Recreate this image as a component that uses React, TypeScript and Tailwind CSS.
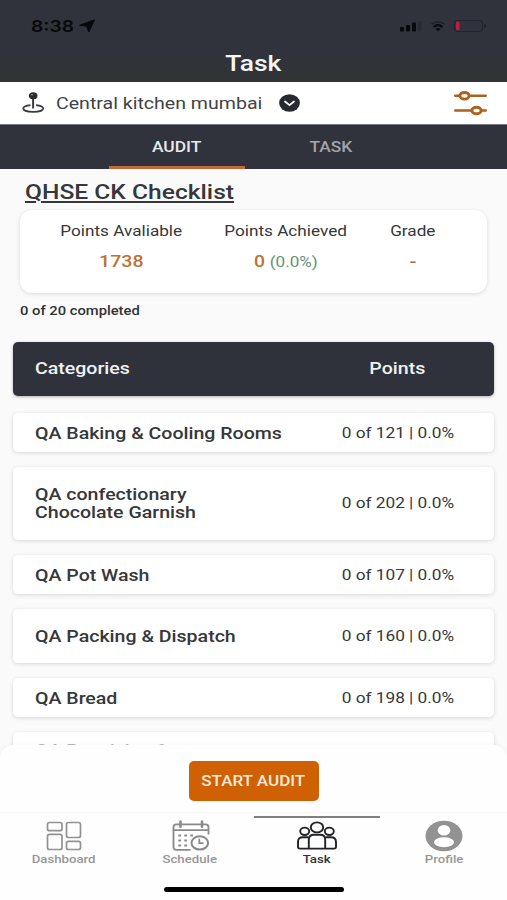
import React from "react";

type Row = { name: string[]; points: string; box: string };

const rows: Row[] = [
  { name: ["QA Baking & Cooling Rooms"], points: "0 of 121 | 0.0%", box: "h-[39px]" },
  { name: ["QA confectionary", "Chocolate Garnish"], points: "0 of 202 | 0.0%", box: "h-[73px] pb-[2px]" },
  { name: ["QA Pot Wash"], points: "0 of 107 | 0.0%", box: "h-[39px]" },
  { name: ["QA Packing & Dispatch"], points: "0 of 160 | 0.0%", box: "h-[54px] pb-[1px]" },
  { name: ["QA Bread"], points: "0 of 198 | 0.0%", box: "h-[39px]" },
  { name: ["QA Receiving &"], points: "", box: "h-[36px] text-[#b4b4b6]" },
];

function Wide({ className = "", scale = "scale-x-[1.2]", children }: { className?: string; scale?: string; children: React.ReactNode }) {
  return <span className={"block w-max whitespace-nowrap " + scale + " " + className}>{children}</span>;
}

function StatusIcons() {
  return (
    <svg className="mr-[20px] mt-[18px] h-[16px] w-[88px]" viewBox="0 0 88 16">
      <g fill="#08090c">
        <rect x="1" y="9" width="4" height="4.5" rx="1" />
        <rect x="7" y="7" width="4" height="6.5" rx="1" />
        <rect x="13" y="4.500" width="4" height="9" rx="1" />
      </g>
      <rect x="19" y="3" width="3.500" height="10.500" rx="1" fill="#282b32" />
      <path d="M32.500 6.300Q39 1.500 45.500 6.300" fill="none" stroke="#202329" strokeWidth="1.700" />
      <path d="M34.500 9Q39 5.200 43.500 9" fill="none" stroke="#08090c" strokeWidth="2.200" />
      <path d="M36.500 10.900Q39 9.200 41.500 10.900L39 13.200Z" fill="#08090c" />
      <rect x="55.500" y="2.500" width="28" height="11" rx="3.500" fill="none" stroke="#23252c" strokeWidth="1.200" />
      <rect x="57" y="3.800" width="3.500" height="8.500" rx="1.200" fill="#b8213f" />
      <path d="M85.300 6V10Q87 9.300 87 8T85.300 6Z" fill="#1d1f25" />
    </svg>
  );
}

function PinIcon() {
  return (
    <svg className="h-[22px] w-[23px]" viewBox="0 0 23 22">
      <path d="M8.500 13.100C4 13.600 1.200 14.800 1.200 16.400C1.200 18.400 5.500 19.800 11.200 19.800S21.200 18.400 21.200 16.400C21.200 14.800 18.400 13.600 14 13.100" fill="none" stroke="#3a3b3e" strokeWidth="1.700" />
      <path d="M10.100 5H12.100V16.500H10.100Z" fill="#3a3b3e" />
      <ellipse cx="11.200" cy="3.800" rx="4.300" ry="3.500" fill="#292b2f" />
      <ellipse cx="10" cy="2.700" rx="1.100" ry=".8" fill="#9a9b9d" />
    </svg>
  );
}

function FilterIcon() {
  return (
    <svg className="h-[26px] w-[33px]" viewBox="0 0 33 26" fill="none" stroke="#ad611f">
      <path d="M1.200 5.800H5.500M15 5.800H31.800M1.200 20.500H17M27.500 20.500H31.800" strokeWidth="2.400" strokeLinecap="round" />
      <ellipse cx="10.500" cy="5.800" rx="4.600" ry="3.300" strokeWidth="2.900" />
      <ellipse cx="22.500" cy="20.500" rx="4.600" ry="3.300" strokeWidth="2.900" />
    </svg>
  );
}

function DashboardIcon() {
  return (
    <svg className="ml-[2px] h-[32px] w-[42px]" viewBox="0 0 42 32" fill="none" stroke="#929292" strokeWidth="1.700">
      <rect x="4.500" y="2.500" width="14.500" height="8.200" rx="2" />
      <rect x="23.500" y="2.500" width="14" height="15" rx="2" />
      <rect x="4.500" y="14.300" width="14.500" height="15.200" rx="2" />
      <rect x="23.500" y="21.300" width="14" height="8.200" rx="2" />
    </svg>
  );
}

function ScheduleIcon() {
  return (
    <svg className="ml-[1px] h-[32px] w-[42px]" viewBox="0 0 42 32" fill="none" stroke="#898989" strokeWidth="1.800">
      <path d="M20.500 29.800H6.500Q3.500 29.800 3.500 27V7Q3.500 4.300 6.500 4.300H35.500Q38.500 4.300 38.500 7V14.500" />
      <path d="M3.500 10.200H38.500" />
      <path d="M10.500 1.500V6.800M32 1.500V6.800" strokeWidth="2.500" strokeLinecap="round" />
      <path d="M8.300 15.500H23M8.300 20.500H20M8.300 25.500H20" strokeWidth="2.200" strokeDasharray="2.800 3.200" />
      <ellipse cx="29.800" cy="22.900" rx="8.300" ry="6.700" strokeWidth="2" />
      <path d="M29.300 18.800V23.200H33.500" />
    </svg>
  );
}

function TeamIcon() {
  return (
    <svg className="h-[32px] w-[42px]" viewBox="0 0 42 32" fill="none" stroke="#222326" strokeWidth="1.900">
      <ellipse cx="21" cy="7.400" rx="6.200" ry="5" />
      <ellipse cx="8.700" cy="11.300" rx="4.500" ry="3.700" />
      <ellipse cx="33.300" cy="11.300" rx="4.500" ry="3.700" />
      <path d="M12.800 28.600V19.500Q12.800 14.700 18 14.700H24Q29.200 14.700 29.200 19.500V28.600" />
      <path d="M12.500 17.200H7Q2 17.200 2 22V26.800Q2 28.600 4 28.600H38Q40 28.600 40 26.800V22Q40 17.200 35 17.200H29.500" />
    </svg>
  );
}

function ProfileIcon() {
  return (
    <svg className="h-[32px] w-[42px]" viewBox="0 0 42 32">
      <ellipse cx="21" cy="16" rx="18.500" ry="15.300" fill="#929292" />
      <ellipse cx="21" cy="10.200" rx="6.300" ry="5.200" fill="#fefefe" />
      <ellipse cx="21" cy="22.200" rx="10" ry="5" fill="#fefefe" />
    </svg>
  );
}

const tabs = [
  { label: "Dashboard", icon: <DashboardIcon />, tone: "text-[#969696]" },
  { label: "Schedule", icon: <ScheduleIcon />, tone: "text-[#969696]" },
  { label: "Task", icon: <TeamIcon />, tone: "text-[#303236]" },
  { label: "Profile", icon: <ProfileIcon />, tone: "text-[#969696]" },
];

export default function App() {
  return (
    <div className="flex h-[900px] w-[507px] flex-col overflow-hidden bg-[#fafafa] font-['Roboto',sans-serif] text-[#36373a]">
      <header className="h-[82px] shrink-0 bg-linear-to-b from-[#30333c] from-60% to-[#313335]">
        <div className="flex h-[44px] justify-between">
          <div className="flex items-start pl-[31px] pt-[16px] text-[#08090c]">
            <Wide className="origin-left font-['Inter',sans-serif] text-[16px] font-semibold leading-[20px]">8:38</Wide>
            <svg className="ml-[12px] mt-[3px] h-[14px] w-[16px]" viewBox="0 0 16 14">
              <path d="M15.500 .8L9.800 13L7.500 7.200L.5 6.300Z" fill="#08090c" stroke="#08090c" strokeWidth="1" strokeLinejoin="round" />
            </svg>
          </div>
          <StatusIcons />
        </div>
        <div className="flex justify-center pt-[6px]">
          <Wide className="text-[22px] font-medium leading-[28px] text-[#f5f6f8]">Task</Wide>
        </div>
      </header>

      <div className="flex h-[42px] shrink-0 items-center bg-white pl-[22px] pr-[20px]">
        <PinIcon />
        <div className="ml-[11px] w-[223px]">
          <Wide scale="scale-x-[1.15]" className="origin-left text-[17px] leading-[22px] text-[#424346]">Central kitchen mumbai</Wide>
        </div>
        <svg className="h-[18px] w-[21px]" viewBox="0 0 21 18">
          <ellipse cx="10.500" cy="9" rx="10.400" ry="8.800" fill="#292a30" />
          <path d="M6 7.500L10.500 11.200L15 7.500" fill="none" stroke="#fff" strokeWidth="1.700" strokeLinecap="round" />
        </svg>
        <div className="ml-auto"><FilterIcon /></div>
      </div>

      <nav className="flex h-[45px] shrink-0 border-t border-[#777984] bg-[#30323c] pl-[109px]">
        <div className="flex w-[136px] flex-col items-center border-b-[3px] border-[#c16a35] pt-[13px]">
          <Wide className="text-[14.500px] font-medium leading-[20px] text-[#e8e9ec]">AUDIT</Wide>
        </div>
        <div className="flex w-[172px] flex-col items-center pt-[13px]">
          <Wide className="text-[14.500px] font-medium leading-[20px] text-[#a4a5aa]">TASK</Wide>
        </div>
      </nav>

      <main className="flex h-[576px] shrink-0 flex-col overflow-hidden px-[13px] pt-[9px]">
        <h1 className="h-[32px] shrink-0 pl-[12px] pt-[1px]">
          <Wide className="origin-left text-[20.500px] font-medium leading-[27px] underline decoration-[1.500px] underline-offset-[2px]">QHSE CK Checklist</Wide>
        </h1>
        <section className="ml-[7px] flex h-[83px] w-[467px] shrink-0 rounded-[12px] bg-white pt-[10px] shadow-[0_1px_4px_rgba(0,0,0,0.13)]">
          <div className="flex w-[202px] flex-col items-center">
            <Wide scale="scale-x-[1.145]" className="text-[15px] leading-[22px]">Points Avaliable</Wide>
            <Wide scale="scale-x-[1.15]" className="mt-[8px] text-[17px] font-medium leading-[22px] text-[#bd7131]">1738</Wide>
          </div>
          <div className="flex w-[128px] flex-col items-center">
            <Wide scale="scale-x-[1.145]" className="text-[15px] leading-[22px]">Points Achieved</Wide>
            <Wide scale="scale-x-[1.14]" className="mt-[8px] leading-[22px]">
              <span className="text-[17px] font-medium text-[#bd7131]">0</span>
              <span className="ml-[4px] text-[15px] text-[#669178]">(0.0%)</span>
            </Wide>
          </div>
          <div className="flex w-[126px] flex-col items-center">
            <Wide scale="scale-x-[1.145]" className="text-[15px] leading-[22px]">Grade</Wide>
            <Wide className="mt-[8px] text-[17px] font-medium leading-[22px] text-[#9b754f]">-</Wide>
          </div>
        </section>
        <div className="ml-[7px] mt-[9px] shrink-0">
          <Wide scale="scale-x-[1.135]" className="origin-left text-[13px] font-medium leading-[18px] text-[#303134]">0 of 20 completed</Wide>
        </div>

        <div className="mt-[22px] flex h-[54px] shrink-0 items-center rounded-[5px] bg-[#2f323b] pb-[2px] pl-[22px] text-[#f0f1f4] shadow-[0_1px_3px_rgba(0,0,0,0.3)]">
          <Wide scale="scale-x-[1.15]" className="origin-left text-[17px] font-medium leading-[20px]">Categories</Wide>
          <div className="ml-auto flex w-[193px] justify-center">
            <Wide scale="scale-x-[1.15]" className="text-[17px] font-medium leading-[20px]">Points</Wide>
          </div>
        </div>
        <div className="mt-[17px] flex flex-col gap-[15px]">
          {rows.map((r) => (
            <div key={r.name[0]} className={"flex shrink-0 items-center rounded-[5px] bg-white pl-[22px] shadow-[0_1px_4px_rgba(0,0,0,0.14)] " + r.box}>
              <div className="text-[17px] font-medium leading-[18px]">
                {r.name.map((line) => <Wide key={line} scale="scale-x-[1.15]" className="origin-left">{line}</Wide>)}
              </div>
              {r.points && (
                <div className="ml-auto flex w-[193px] justify-center">
                  <Wide scale="scale-x-[1.15]" className="text-[15px] leading-[18px]">{r.points}</Wide>
                </div>
              )}
            </div>
          ))}
        </div>
      </main>

      <section className="z-10 flex h-[68px] shrink-0 justify-center rounded-t-[14px] border-b border-[#f8f8f8] bg-[#fefefe] pt-[16px] shadow-[0_-1px_4px_rgba(0,0,0,0.04)]">
        <button className="flex h-[40px] w-[130px] items-center justify-center rounded-[5px] bg-[#cf6004] pt-[2px]">
          <Wide scale="scale-x-[1.175]" className="text-[14.500px] font-medium leading-[20px] text-[#fbeadb]">START AUDIT</Wide>
        </button>
      </section>

      <footer className="flex h-[87px] shrink-0 flex-col bg-[#fefefe]">
        <div className="flex h-[73px]">
          {tabs.map((t) => (
            <div key={t.label} className={"flex flex-1 flex-col items-center " + t.tone}>
              <div className={"mt-[3px] h-[2px] w-full " + (t.label === "Task" ? "bg-[#808080]" : "")} />
              <div className="mt-[2px]">{t.icon}</div>
              <Wide className="text-[11px] font-medium leading-[15px]">{t.label}</Wide>
            </div>
          ))}
        </div>
        <div className="mx-auto mt-[1px] h-[5px] w-[180px] rounded-full bg-black" />
      </footer>
    </div>
  );
}
